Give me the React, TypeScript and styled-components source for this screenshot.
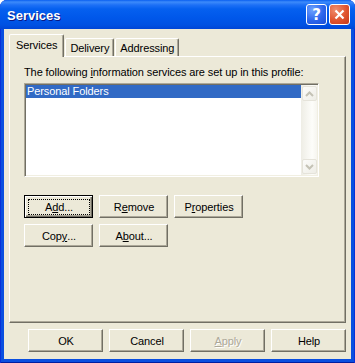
import React from 'react';
import styled, { createGlobalStyle } from 'styled-components';

const GlobalStyle = createGlobalStyle`
  html, body {
    margin: 0;
    padding: 0;
    background: #ffffff;
  }
  body {
    font-family: 'Liberation Sans', Arial, sans-serif;
    font-size: 11px;
    letter-spacing: -0.1px;
    color: #000;
  }
`;

const Window = styled.div`
  width: 355px;
  height: 363px;
  display: flex;
  flex-direction: column;
  background: #0a4fe0;
  border-radius: 7px 7px 0 0;
  box-shadow: inset 1px 0 #0831d9, inset -1px 0 #0831d9, inset 0 -1px #001ea0;
  overflow: hidden;
`;

const TitleBar = styled.div`
  height: 29px;
  flex: none;
  display: flex;
  align-items: center;
  padding: 0 5px 0 7px;
  background: linear-gradient(
    to bottom,
    #0a5ff0 0,
    #3d8bfa 2px,
    #1d70f6 5px,
    #0560ef 9px,
    #0057ea 18px,
    #0051e2 25px,
    #0045d6 29px
  );
`;

const Title = styled.div`
  flex: 1;
  color: #fff;
  font-family: 'Liberation Sans', Arial, sans-serif;
  font-weight: bold;
  font-size: 13px;
  letter-spacing: 0;
  text-shadow: 1px 1px #0a1883;
  padding-top: 1px;
`;

const CaptionButton = styled.div<{ $close?: boolean }>`
  width: 19px;
  height: 19px;
  margin-left: 2px;
  border: 1px solid #fff;
  border-radius: 3px;
  display: flex;
  align-items: center;
  justify-content: center;
  color: #fff;
  font-weight: bold;
  font-size: 15px;
  font-family: 'DejaVu Sans', sans-serif;
  background: ${p =>
    p.$close
      ? 'radial-gradient(circle at 30% 25%, #f08e6e 0, #e0542f 55%, #c6381a 100%)'
      : 'radial-gradient(circle at 30% 25%, #6ea3ff 0, #2d66ec 55%, #1a4ed6 100%)'};
`;

const Client = styled.div`
  flex: 1;
  margin: 0 4px 4px 4px;
  background: #ece9d8;
  display: flex;
  flex-direction: column;
  padding: 7px 5px 7px 5px;
`;

const TabStrip = styled.div`
  display: flex;
  align-items: flex-end;
  height: 21px;
  margin-bottom: -1px;
`;

const Tab = styled.div<{ $active?: boolean }>`
  position: relative;
  z-index: ${p => (p.$active ? 1 : 0)};
  height: ${p => (p.$active ? 20 : 17)}px;
  padding: ${p => (p.$active ? '0 6px 2px 6px' : '0 4px')};
  margin-left: ${p => (p.$active ? 0 : 1)}px;
  margin-bottom: ${p => (p.$active ? 0 : 1)}px;
  background: #ece9d8;
  border: 1px solid;
  border-bottom: none;
  border-color: #fff #716f64 transparent #fff;
  border-radius: 2px 2px 0 0;
  box-shadow: inset -1px 0 #aca899;
  display: flex;
  align-items: center;
`;

const Panel = styled.div`
  flex: 1;
  border: 1px solid;
  border-color: #fff #716f64 #716f64 #fff;
  box-shadow: inset -1px -1px #aca899;
  padding: 9px 14px;
  display: flex;
  flex-direction: column;
`;

const Label = styled.div`
  line-height: 13px;
  margin-bottom: 4px;
`;

const ListBox = styled.div`
  width: 295px;
  height: 94px;
  box-sizing: border-box;
  border: 1px solid;
  border-color: #aca899 #fff #fff #aca899;
  box-shadow: inset 1px 1px #716f64, inset -1px -1px #f1efe2;
  background: #fff;
  padding: 1px;
  display: flex;
`;

const Rows = styled.div`
  flex: 1;
`;

const Row = styled.div<{ $selected?: boolean }>`
  height: 13px;
  line-height: 13px;
  padding-left: 1px;
  background: ${p => (p.$selected ? '#316ac5' : 'transparent')};
  color: ${p => (p.$selected ? '#fff' : '#000')};
`;

const ScrollBar = styled.div`
  width: 16px;
  display: flex;
  flex-direction: column;
  justify-content: space-between;
  align-items: flex-end;
  background: linear-gradient(to right, #eeede5, #fdfdfa 70%, #f6f5ef);
`;

const ScrollButton = styled.div`
  width: 13px;
  height: 13px;
  margin: 1px 0;
  border: 1px solid #e5e3da;
  border-radius: 2px;
  background: linear-gradient(to bottom right, #fcfcfa, #eeede6);
  display: flex;
  align-items: center;
  justify-content: center;
`;

const ButtonGrid = styled.div`
  margin-top: 18px;
  display: grid;
  grid-template-columns: repeat(3, 69px);
  grid-auto-rows: 23px;
  column-gap: 6px;
  row-gap: 6px;
`;

const Button = styled.div<{ $default?: boolean; $disabled?: boolean; $wide?: boolean }>`
  width: ${p => (p.$wide ? 75 : 69)}px;
  height: 23px;
  box-sizing: border-box;
  background: #ece9d8;
  border: 1px solid;
  border-color: ${p => (p.$default ? '#000' : '#fff #716f64 #716f64 #fff')};
  box-shadow: ${p =>
    p.$default
      ? 'inset 1px 1px #fff, inset -1px -1px #716f64, inset -2px -2px #aca899'
      : 'inset -1px -1px #aca899'};
  display: flex;
  align-items: center;
  justify-content: center;
  padding: 3px 2px 2px 3px;
  color: ${p => (p.$disabled ? '#aca899' : '#000')};
  text-shadow: ${p => (p.$disabled ? '1px 1px #fff' : 'none')};
`;

const Focus = styled.span<{ $on?: boolean }>`
  flex: 1;
  align-self: stretch;
  display: flex;
  align-items: center;
  justify-content: center;
  border: 1px dotted ${p => (p.$on ? '#000' : 'transparent')};
`;

const Footer = styled.div`
  margin-top: 6px;
  display: flex;
  justify-content: flex-end;
  gap: 6px;
`;

const Key = styled.span`
  text-decoration: underline;
  text-underline-offset: 1px;
`;

const Chevron = ({ up }: { up?: boolean }) => (
  <svg width="9" height="6" viewBox="0 0 9 6">
    <polyline
      points={up ? '1,5 4.5,1.5 8,5' : '1,1 4.5,4.5 8,1'}
      fill="none"
      stroke="#c4c2b5"
      strokeWidth="2"
    />
  </svg>
);

export default function App() {
  return (
    <>
      <GlobalStyle />
      <Window>
        <TitleBar>
          <Title>Services</Title>
          <CaptionButton>?</CaptionButton>
          <CaptionButton $close>
            <svg width="11" height="11" viewBox="0 0 11 11">
              <path d="M1.5 1.5 L9.5 9.5 M9.5 1.5 L1.5 9.5" stroke="#fff" strokeWidth="2.2" />
            </svg>
          </CaptionButton>
        </TitleBar>
        <Client>
          <TabStrip>
            <Tab $active>Services</Tab>
            <Tab>Delivery</Tab>
            <Tab>Addressing</Tab>
          </TabStrip>
          <Panel>
            <Label>
              The following <Key>i</Key>nformation services are set up in this profile:
            </Label>
            <ListBox>
              <Rows>
                <Row $selected>Personal Folders</Row>
              </Rows>
              <ScrollBar>
                <ScrollButton>
                  <Chevron up />
                </ScrollButton>
                <ScrollButton>
                  <Chevron />
                </ScrollButton>
              </ScrollBar>
            </ListBox>
            <ButtonGrid>
              <Button $default>
                <Focus $on>
                  A<Key>d</Key>d...
                </Focus>
              </Button>
              <Button>
                <Focus>
                  R<Key>e</Key>move
                </Focus>
              </Button>
              <Button>
                <Focus>
                  P<Key>r</Key>operties
                </Focus>
              </Button>
              <Button>
                <Focus>
                  Cop<Key>y</Key>...
                </Focus>
              </Button>
              <Button>
                <Focus>
                  A<Key>b</Key>out...
                </Focus>
              </Button>
            </ButtonGrid>
          </Panel>
          <Footer>
            <Button $wide>
              <Focus>OK</Focus>
            </Button>
            <Button $wide>
              <Focus>Cancel</Focus>
            </Button>
            <Button $wide $disabled>
              <Focus>
                <Key>A</Key>pply
              </Focus>
            </Button>
            <Button $wide>
              <Focus>Help</Focus>
            </Button>
          </Footer>
        </Client>
      </Window>
    </>
  );
}
